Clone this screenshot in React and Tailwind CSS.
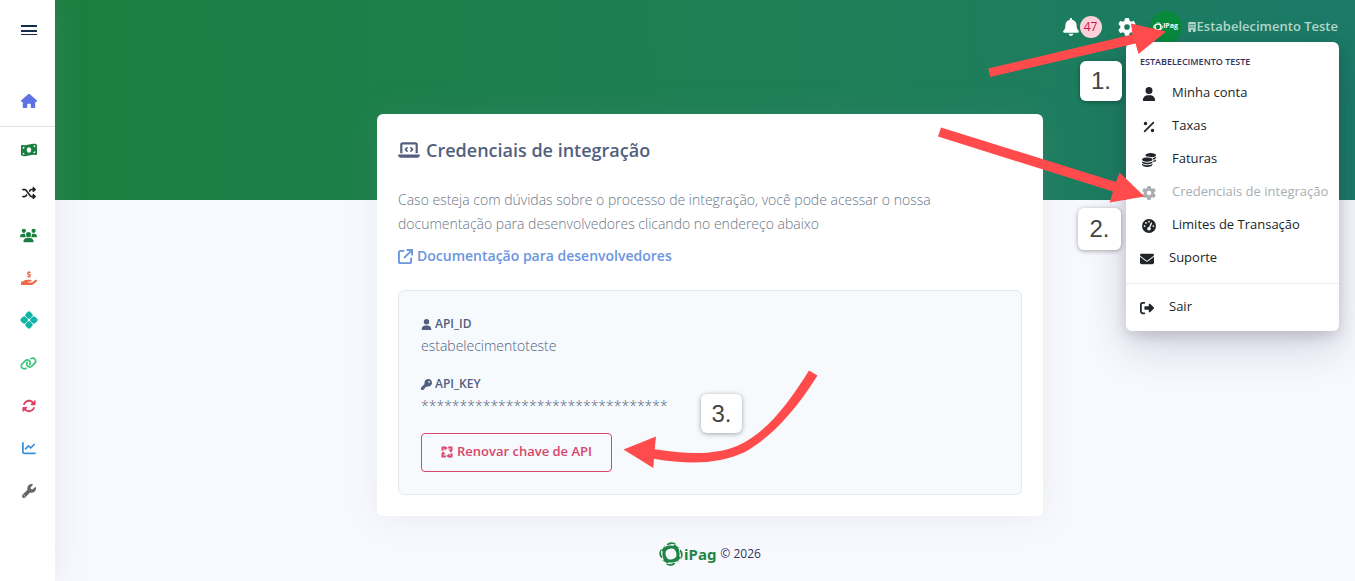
import React from "react";
import {
  FaHouse, FaMoneyBillWave, FaShuffle, FaUsers, FaHandHoldingDollar, FaLink, FaRotate,
  FaChartLine, FaWrench, FaBell, FaGear, FaBuilding, FaUser, FaPercent, FaCoins, FaGaugeHigh,
  FaEnvelope, FaRightFromBracket, FaLaptopCode, FaArrowUpRightFromSquare, FaKey,
} from "react-icons/fa6";

function PixIcon({ className }) {
  return (
    <svg viewBox="0 0 16 16" className={className} fill="currentColor" aria-hidden="true">
      <g transform="rotate(45 8 8)">
        <rect x="2.1" y="2.1" width="5.700" height="5.700" rx="1.8" />
        <rect x="8.200" y="2.1" width="5.700" height="5.700" rx="1.8" />
        <rect x="2.1" y="8.200" width="5.700" height="5.700" rx="1.8" />
        <rect x="8.200" y="8.200" width="5.700" height="5.700" rx="1.8" />
      </g>
    </svg>
  );
}

function RenewIcon({ className }) {
  return (
    <svg viewBox="0 0 12 12" className={className} aria-hidden="true">
      {[0, 90, 180, 270].map((a) => (
        <g key={a} transform={`rotate(${a} 6 6)`}>
          <path d="M1.500 4.800V1.500H3.800" fill="none" stroke="currentColor" strokeWidth="1.900" />
          <path d="M3.400 0L6.800 2L3.400 4.600z" fill="currentColor" />
        </g>
      ))}
    </svg>
  );
}

function RingMark({ className }) {
  return (
    <svg viewBox="0 0 24 24" className={className} aria-hidden="true">
      <rect x="5.400" y="5.400" width="13.200" height="13.200" rx="4.500" transform="rotate(8 12 12)" fill="none" stroke="currentColor" strokeWidth="2.200" />
      {[0, 90, 180, 270].map((a) => (
        <g key={a} transform={`rotate(${a} 12 12)`}>
          <path d="M2.200 9C4.800 3.200 12.500 1.600 21.200 5.600C15.500 5.200 10.500 5.400 6.200 9.600z" fill="currentColor" />
          <path d="M7.600 2.600C10 -.3 14.400 -.6 17.600 2.600C14 1.700 11.500 1.800 9 3.200z" fill="currentColor" />
        </g>
      ))}
    </svg>
  );
}

const nav = [
  ["Financeiro", FaMoneyBillWave, "size-4 text-[#1b7f40]"],
  ["Transações", FaShuffle, "size-3.5 text-[#212529]"],
  ["Clientes", FaUsers, "size-[17px] text-[#1b7f40]"],
  ["Cobranças", FaHandHoldingDollar, "size-4 text-[#ee6b4a]"],
  ["Pix", PixIcon, "size-[18px] text-[#13b5a6]"],
  ["Links", FaLink, "size-[17px] text-[#3cc47c]"],
  ["Assinaturas", FaRotate, "size-3.5 text-[#e03e5c]"],
  ["Relatórios", FaChartLine, "size-3.5 text-[#3d8fdc]"],
  ["Ferramentas", FaWrench, "size-3.5 text-[#666666]"],
];

function Sidebar() {
  return (
    <aside className="z-10 flex w-[55px] shrink-0 flex-col items-center bg-white shadow-[0_0_32px_rgba(136,152,170,0.18)]">
      <button aria-label="Menu" className="mt-6 ml-0.5 flex h-3 w-4 flex-col justify-between py-px">
        <span className="h-0.5 w-full bg-[#172b4d]" />
        <span className="h-0.5 w-full bg-[#172b4d]" />
        <span className="h-px w-full bg-[#172b4d]" />
      </button>
      <a href="#inicio" aria-label="Início" className="mt-[57px] ml-0.5 flex h-4 items-center text-[#5e72e4]">
        <FaHouse className="size-4" />
      </a>
      <nav className="mt-[17px] grid h-[386px] w-full auto-rows-fr border-t border-[#dfe1e5] pt-0.5">
        {nav.map(([label, Icon, cls]) => (
          <a key={label} href="#menu" aria-label={label} className="flex items-center justify-center pl-0.5">
            <Icon className={cls} />
          </a>
        ))}
      </nav>
    </aside>
  );
}

const menu = [
  ["Minha conta", FaUser, false, true],
  ["Taxas", FaPercent, false, true],
  ["Faturas", FaCoins, false, true],
  ["Credenciais de integração", FaGear, true, true],
  ["Limites de Transação", FaGaugeHigh, false, true],
  ["Suporte", FaEnvelope, false, false],
];

function MenuItem({ label, Icon, muted, wide }) {
  return (
    <a
      href="#conta"
      className={`flex h-[33px] items-center whitespace-nowrap text-[13px] ${muted ? "text-[#a9adb3]" : "text-[#212529]"} ${wide ? "gap-4 pl-4" : "gap-[15px] pl-3.5"}`}
    >
      <Icon className="mt-0.5 size-3.5 shrink-0" />
      {label}
    </a>
  );
}

function AccountMenu() {
  return (
    <div className="absolute top-[42px] right-4 w-[213px] rounded-md bg-white pt-2.5 pb-2 shadow-[0_16px_40px_rgba(50,50,93,0.2),0_5px_15px_rgba(0,0,0,0.15)]">
      <h6 className="mb-1 px-3.5 text-[9px] leading-5 font-semibold text-[#32325d]">ESTABELECIMENTO TESTE</h6>
      {menu.map(([label, Icon, muted, wide]) => (
        <MenuItem key={label} label={label} Icon={Icon} muted={muted} wide={wide} />
      ))}
      <hr className="mt-[9px] mb-1.5 border-[#e9ecef]" />
      <MenuItem label="Sair" Icon={FaRightFromBracket} />
    </div>
  );
}

function TopBar() {
  return (
    <header className="flex h-[53px] items-center justify-end pr-[17px] text-white">
      <button aria-label="Notificações" className="flex items-center">
        <FaBell className="size-[18px]" />
        <span className="flex size-[22px] items-center justify-center rounded-full bg-[#fdd1da] text-xs text-[#d0103c]">47</span>
      </button>
      <button aria-label="Configurações" className="ml-4">
        <FaGear className="size-[18px]" />
      </button>
      <button className="ml-3.5 flex items-center text-[#b4d8ca]">
        <span className="flex size-8 items-center justify-center rounded-full bg-[#078a3c] text-white">
          <RingMark className="size-2.5" />
          <span className="text-[7px] font-bold">iPag</span>
        </span>
        <FaBuilding className="ml-1.5 h-2.5 w-2" />
        <span className="ml-px text-[13px] font-semibold">Estabelecimento Teste</span>
      </button>
    </header>
  );
}

function Credentials() {
  return (
    <section className="mx-auto mt-[61px] w-full max-w-[666px] rounded-md bg-white px-[21px] pt-5 pb-[21px] text-[#525f7f] shadow-[0_0_32px_rgba(136,152,170,0.15)]">
      <h1 className="flex items-center gap-1.5 text-lg leading-8 font-semibold">
        <FaLaptopCode className="size-[22px]" />
        Credenciais de integração
      </h1>
      <p className="mt-[22px] text-sm leading-6 font-light text-[#6b7687]">
        Caso esteja com dúvidas sobre o processo de integração, você pode acessar o nossa documentação para
        desenvolvedores clicando no endereço abaixo
      </p>
      <a href="#docs" className="mt-2 flex items-center gap-1 text-sm leading-6 font-semibold text-[#6b95e0]">
        <FaArrowUpRightFromSquare className="size-[15px]" />
        Documentação para desenvolvedores
      </a>
      <div className="mt-[22px] rounded-md border border-[#e3e9ef] bg-[#f6fafd] p-[22px]">
        <h2 className="flex items-center gap-[3px] text-xs leading-[22px] font-semibold">
          <FaUser className="size-[11px]" />
          API_ID
        </h2>
        <p className="text-sm leading-[22px] font-light">estabelecimentoteste</p>
        <h2 className="mt-4 flex items-center gap-[3px] text-xs leading-[22px] font-semibold">
          <FaKey className="size-[11px]" />
          API_KEY
        </h2>
        <p className="text-sm leading-[22px] font-light">********************************</p>
        <button className="mt-4 flex h-[39px] items-center gap-1 rounded border border-[#d9456b] px-[19px] pb-0.5 text-[13px] font-semibold text-[#d9456b]">
          <RenewIcon className="size-3" />
          Renovar chave de API
        </button>
      </div>
    </section>
  );
}

function Footer() {
  return (
    <footer className="mt-6 flex items-center justify-center text-xs text-[#32325d]">
      <RingMark className="size-6 text-[#1f8444]" />
      <span className="ml-px font-['Noto_Sans'] text-[15px] leading-7 font-bold text-[#1f8444]">iPag</span>
      <span className="ml-1">© 2026</span>
    </footer>
  );
}

function Step({ className, children }) {
  return (
    <div className={`absolute flex items-center justify-center rounded-md bg-white font-['Liberation_Sans'] text-2xl text-[#444444] shadow-[0_1px_5px_rgba(0,0,0,0.35)] ${className}`}>
      {children}
    </div>
  );
}

function Annotations() {
  return (
    <div className="pointer-events-none absolute top-0 right-0 z-20 h-[581px] w-[1355px]">
      <svg viewBox="0 0 1355 581" className="h-full w-full" fill="#ff4b4b" aria-hidden="true">
        <path d="M988.300 68.500L1132.500 34.500L1131 23.500L1166 31.500L1138.500 54L1135.500 43.500L990.300 77z" />
        <path d="M941 127.500L1116 182L1119.500 172.500L1144.500 196.500L1109.700 202.500L1113 191.500L938 136.500z" />
        <path d="M809 370.500L817.500 375.500C792 416 768 439 745 452C719 464 690 465 654 458.700L653.300 468L623.500 449.500L656 436.500L654.700 449.300C688 454.500 715 455 737 446C765 433 785 409 809 370.500z" />
      </svg>
      <Step className="top-[61px] left-[1080px] h-10 w-[42px]">1.</Step>
      <Step className="top-[208px] left-[1078px] h-[42px] w-[43px]">2.</Step>
      <Step className="top-[394px] left-[701px] h-[39px] w-[41px]">3.</Step>
    </div>
  );
}

export default function App() {
  return (
    <div className="relative flex min-h-screen bg-[#f8f9fe] font-['Open_Sans',sans-serif]">
      <Sidebar />
      <main className="min-w-0 flex-1 bg-[linear-gradient(87deg,#1b7f40_0%,#1e7f57_60%,#1b7a68_100%)] bg-[length:100%_200px] bg-no-repeat">
        <TopBar />
        <div className="pl-2.5">
          <Credentials />
          <Footer />
        </div>
      </main>
      <AccountMenu />
      <Annotations />
    </div>
  );
}
